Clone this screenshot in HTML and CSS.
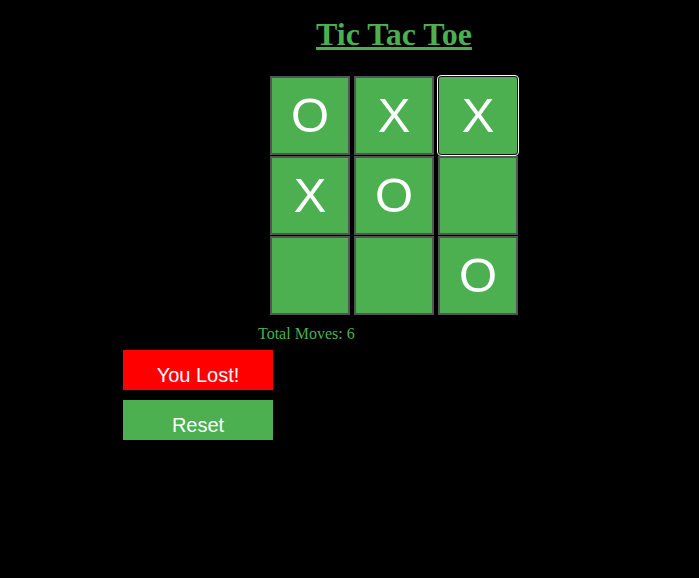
FILE: index.html
```html
<!DOCTYPE html>
<html lang="en">
<head>
<meta charset="utf-8">
<title>Tic Tac Toe</title>
<link rel="stylesheet" href="styles.css">
</head>
<body>
<div class="game">
  <h1 class="title">Tic Tac Toe</h1>
  <div class="board">
    <button class="cell">O</button>
    <button class="cell">X</button>
    <button class="cell cell-focus">X</button>
    <button class="cell">X</button>
    <button class="cell">O</button>
    <button class="cell"></button>
    <button class="cell"></button>
    <button class="cell"></button>
    <button class="cell">O</button>
  </div>
  <p class="moves">Total Moves: 6</p>
</div>
<div class="actions">
  <div class="status">You Lost!</div>
  <button class="reset">Reset</button>
</div>
</body>
</html>
```
FILE: styles.css
```css
html, body {
  background: #000;
}
body {
  margin: 0;
  padding: 8px;
  font-family: "Liberation Serif", "Times New Roman", serif;
}
.game {
  margin-left: 250px;
  width: 272px;
  display: flex;
  flex-direction: column;
}
.title {
  margin: 8px 0 23px;
  text-align: center;
  font-size: 32px;
  font-weight: bold;
  color: #4caf50;
  text-decoration: underline;
  line-height: 37px;
}
.board {
  align-self: center;
  display: grid;
  grid-template-columns: repeat(3, 80px);
  grid-auto-rows: 79px;
  column-gap: 4px;
  row-gap: 1px;
}
.cell {
  box-sizing: border-box;
  margin: 0;
  padding: 0;
  background: #4caf50;
  border: 2px solid #555;
  color: #fff;
  font-family: "Liberation Sans", Arial, sans-serif;
  font-size: 49px;
  line-height: 1;
  display: flex;
  align-items: center;
  justify-content: center;
}
.cell-focus {
  border: 1px solid #111;
  border-radius: 3px;
  outline: 1px solid #fff;
  outline-offset: 0;
}
.moves {
  margin: 10px 0 0;
  font-size: 16px;
  color: #4caf50;
  line-height: 18px;
}
.actions {
  margin-left: 115px;
  margin-top: 7px;
  display: flex;
  flex-direction: column;
  gap: 10px;
  width: 150px;
}
.status, .reset {
  box-sizing: border-box;
  height: 40px;
  padding: 14px 0 3px;
  margin: 0;
  border: none;
  text-align: center;
  font-family: "Liberation Sans", Arial, sans-serif;
  font-size: 20px;
  line-height: 23px;
  color: #fff;
}
.status {
  background: #ff0000;
}
.reset {
  background: #4caf50;
  display: block;
  width: 150px;
}
```
